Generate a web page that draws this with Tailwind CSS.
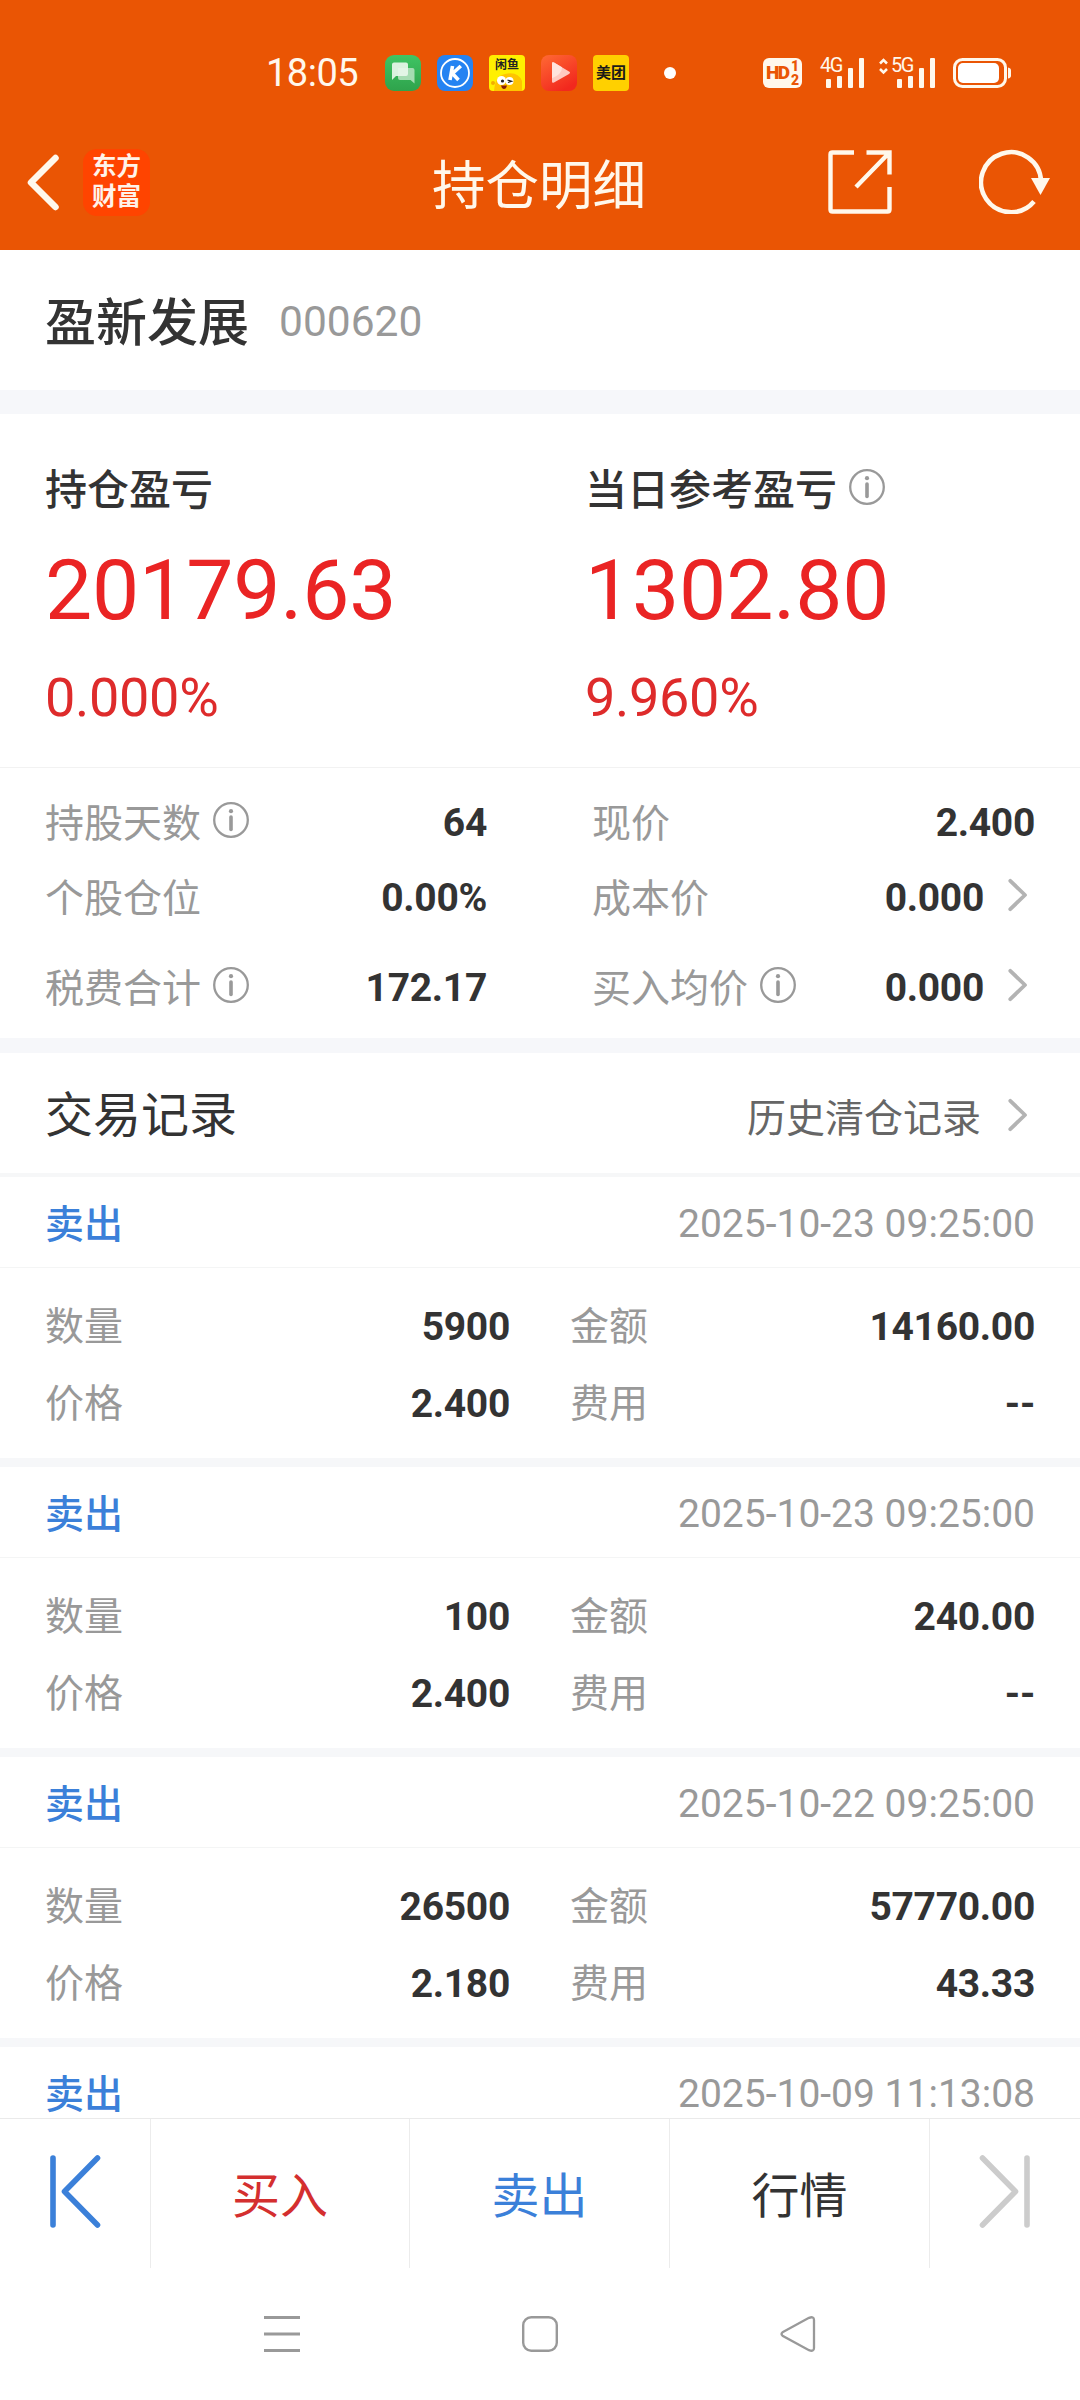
<!DOCTYPE html>
<html lang="zh-CN">
<head>
<meta charset="utf-8">
<title>持仓明细</title>
<script src="https://cdn.jsdelivr.net/npm/@tailwindcss/browser@4"></script>
</head>
<body class="bg-white">
<svg class="hidden">
  <symbol id="info" viewBox="0 0 36 36"><circle cx="18" cy="18" r="16.8" fill="none" stroke="#999" stroke-width="2.3"/><circle cx="18" cy="9.2" r="2.1" fill="#999"/><path d="M18 15v12.5" stroke="#999" stroke-width="3.6" stroke-linecap="round"/></symbol>
  <symbol id="more" viewBox="0 0 20 34"><path d="M2.3 2.8L17 17L2.3 31.2" fill="none" stroke="#b3b3b3" stroke-width="3.8" stroke-linecap="round" stroke-linejoin="round"/></symbol>
</svg>
<div class="flex h-[2400px] w-[1080px] flex-col overflow-hidden bg-white font-['Roboto','Noto_Sans_CJK_SC',sans-serif] text-[39px] leading-[60px] text-[#333]">

  <header class="h-[250px] shrink-0 bg-[#ea5504] text-white">
    <!-- status bar -->
    <div class="flex h-[145px] items-center pl-[266px] text-[#fff8ec]">
      <div class="w-[119px] text-[38px] leading-[40px] tracking-[-0.5px]">18:05</div>
      <div class="flex gap-4">
        <svg class="size-9" viewBox="0 0 36 36"><defs><linearGradient id="g1" x1="0" y1="0" x2="0" y2="1"><stop offset="0" stop-color="#3fc463"/><stop offset="1" stop-color="#2fa34c"/></linearGradient></defs><rect width="36" height="36" rx="9" fill="url(#g1)"/><path d="M13 13h14.500q2 0 2 2v13.500l-4-3.500H15q-2 0-2-2z" fill="#a5dcb2"/><path d="M9 7.500h12q2 0 2 2V19q0 2-2 2H11l-4 4V9.500q0-2 2-2z" fill="#e6f6e9" fill-opacity=".93"/></svg>
        <svg class="size-9" viewBox="0 0 36 36"><rect width="36" height="36" rx="8" fill="#2583f2"/><circle cx="18" cy="18" r="14" fill="none" stroke="#fff" stroke-width="1.800"/><path d="M15.500 11L13 25M23.800 11l-8.300 7.500L21.500 25" fill="none" stroke="#fff" stroke-width="3.600"/></svg>
        <div class="relative size-9 overflow-hidden rounded-[4px] bg-[#fff000] text-center text-[12px] leading-[20px] font-bold text-[#222]">闲鱼
          <svg class="absolute inset-0 size-9" viewBox="0 0 36 36"><path d="M5 36q1-15 11-17 13-3 17 7v10z" fill="#ffc400"/><circle cx="4" cy="28" r="2" fill="#f2ae00"/><circle cx="12.500" cy="25.500" r="4.500" fill="#fff"/><circle cx="20.500" cy="26" r="4" fill="#fff"/><circle cx="13.500" cy="26" r="1.600" fill="#222"/><path d="M18.500 25l4 1.300-3.500 1.200" fill="none" stroke="#222" stroke-width="1.300"/><path d="M12 30.500h6q-1 4-3.500 3.500-2-.5-2.500-3.500z" fill="#8a1c08"/></svg>
        </div>
        <svg class="size-9" viewBox="0 0 36 36"><defs><linearGradient id="g2" x1="0" y1="0" x2=".6" y2="1"><stop offset="0" stop-color="#ff6a34"/><stop offset="1" stop-color="#f2281e"/></linearGradient></defs><rect width="36" height="36" rx="8" fill="url(#g2)"/><path d="M11 8.500q0-2 2-1l15 9q2 1.200 0 2.400l-15 8.500q-2 1-2-1z" fill="#ffc9c1"/><path d="M11 8.500q0-2 2-1l8 4.800q0 7-10 11z" fill="#ffe3dd"/></svg>
        <div class="size-9 rounded-[4px] bg-[#ffd000] text-center text-[15px] leading-[36px] font-bold whitespace-nowrap text-[#1a1a1a]">美团</div>
      </div>
      <div class="ml-[35px] size-3 rounded-full bg-white"></div>
      <div class="ml-[87px] flex h-[30px] w-[39px] items-center rounded-[6px] bg-[#fff8ec] pl-[3px] text-[#ea5504]">
        <span class="w-[25px] text-[19px] leading-[22px] font-black tracking-[-1.500px]">HD</span>
        <span class="flex flex-col text-[14px] leading-[14px] font-black"><span>1</span><span>2</span></span>
      </div>
      <div class="relative ml-[18px] h-[30px] w-[44px]">
        <span class="absolute -top-px left-0 text-[20px] leading-[17px] tracking-[-1.500px]">4G</span>
        <svg class="absolute inset-0 h-[30px] w-[44px]" viewBox="0 0 44 30"><g fill="#fff8ec"><rect x="6" y="21" width="5" height="9" rx="1"/><rect x="17" y="18" width="5" height="12" rx="1"/><rect x="28" y="10" width="5" height="20" rx="1"/><rect x="39" y="0" width="5" height="30" rx="1"/></g></svg>
      </div>
      <div class="relative ml-[15px] h-[30px] w-[56px]">
        <span class="absolute -top-px left-[12px] text-[20px] leading-[17px] tracking-[-1.500px]">5G</span>
        <svg class="absolute inset-0 h-[30px] w-[56px]" viewBox="0 0 56 30"><path d="M1 5.500L4.500 2L8 5.500M1 11l3.500 3.500L8 11" fill="none" stroke="#fff8ec" stroke-width="2.500"/><g fill="#fff8ec"><rect x="18" y="21" width="5" height="9" rx="1"/><rect x="29" y="18" width="5" height="12" rx="1"/><rect x="40" y="10" width="5" height="20" rx="1"/><rect x="51" y="0" width="5" height="30" rx="1"/></g></svg>
      </div>
      <svg class="ml-[18px] h-[30px] w-[58px]" viewBox="0 0 58 30"><rect x="1.500" y="1.500" width="51" height="27" rx="8" fill="none" stroke="#fff8ec" stroke-width="3"/><rect x="5" y="5" width="41" height="20" rx="5" fill="#fff"/><path d="M55 9.500q3 .5 3 3v5q0 2.500-3 3z" fill="#fff8ec"/></svg>
    </div>
    <!-- title bar -->
    <div class="flex h-[75px] items-center">
      <svg class="ml-[27px] h-[57px] w-8" viewBox="0 0 32 57"><path d="M28.500 4L4 28.500L28.500 53" fill="none" stroke="#fff8ec" stroke-width="6.500" stroke-linecap="round" stroke-linejoin="round"/></svg>
      <div class="ml-[24px] h-[67px] w-[67px] rounded-[14px] bg-[#ff4400] pt-[3px] text-center text-[24.500px] leading-[30px] font-bold text-[#fff3ea]">东方<br>财富</div>
      <h1 class="mt-[8px] ml-[282px] w-[216px] text-[53.500px] leading-[75px] font-normal whitespace-nowrap text-[#fff8ec]">持仓明细</h1>
      <svg class="mb-px ml-[180px] size-16" viewBox="0 0 64 64"><path d="M26 2.500H4.500Q2.500 2.500 2.500 4.500V59.500Q2.500 61.500 4.500 61.500H59.500Q61.500 61.500 61.500 59.500V37M38.500 2.500H61.500V24.500M61 3L28 37" fill="none" stroke="#fff8ec" stroke-width="4.400"/></svg>
      <svg class="mb-[3px] ml-[87px] h-[66px] w-[72px]" viewBox="0 0 72 66"><path d="M55 53.500A30 30 0 1 1 62 33" fill="none" stroke="#fff8ec" stroke-width="4.600"/><path d="M52 30H71L61.500 47z" fill="#fff8ec"/></svg>
    </div>
  </header>

  <section class="flex h-[140px] shrink-0 items-start pl-[45px]">
    <h2 class="mt-[39px] w-[234px] text-[51px] leading-[70px] font-medium">盈新发展</h2>
    <span class="mt-[42px] text-[42.500px] text-[#999]">000620</span>
  </section>
  <div class="h-6 shrink-0 bg-[#f6f7fa]"></div>

  <section class="grid h-[354px] shrink-0 grid-cols-2 border-b border-[#f2f2f2] pt-[47px]">
    <div class="pl-[45px]">
      <div class="text-[42px] font-medium">持仓盈亏</div>
      <div class="mt-5 text-[84px] leading-[100px] tracking-[-0.15px] text-[#ea2424]">20179.63</div>
      <div class="mt-[27px] text-[54px] tracking-[-0.3px] text-[#de2b2b]">0.000%</div>
    </div>
    <div class="pl-[45px]">
      <div class="flex items-center text-[42px] font-medium">当日参考盈亏<svg class="mb-2 ml-3 size-9"><use href="#info"/></svg></div>
      <div class="mt-5 text-[84px] leading-[100px] tracking-[-0.15px] text-[#ea2424]">1302.80</div>
      <div class="mt-[27px] text-[54px] tracking-[-0.3px] text-[#de2b2b]">9.960%</div>
    </div>
  </section>

  <section class="grid h-[270px] shrink-0 grid-cols-[442px_443px] grid-rows-[75px_75px_90px] content-start gap-x-[105px] pt-[17px] pl-[45px] text-[#999]">
    <div class="flex items-center"><span class="mt-[2px]">持股天数</span><svg class="mb-[5px] ml-3 size-9"><use href="#info"/></svg><b class="ml-auto tracking-[-0.3px] text-[#333]">64</b></div>
    <div class="flex items-center"><span class="mt-[2px]">现价</span><b class="ml-auto tracking-[-0.3px] text-[#333]">2.400</b></div>
    <div class="flex items-center"><span class="mt-[2px]">个股仓位</span><b class="ml-auto tracking-[-0.3px] text-[#333]">0.00%</b></div>
    <div class="flex items-center"><span class="mt-[2px]">成本价</span><b class="ml-auto tracking-[-0.3px] text-[#333]">0.000</b><svg class="mr-[7px] mb-[5px] ml-6 h-[34px] w-5"><use href="#more"/></svg></div>
    <div class="flex items-center pt-[15px]"><span class="mt-[2px]">税费合计</span><svg class="mb-[5px] ml-3 size-9"><use href="#info"/></svg><b class="ml-auto tracking-[-0.3px] text-[#333]">172.17</b></div>
    <div class="flex items-center pt-[15px]"><span class="mt-[2px]">买入均价</span><svg class="mb-[5px] ml-3 size-9"><use href="#info"/></svg><b class="ml-auto tracking-[-0.3px] text-[#333]">0.000</b><svg class="mr-[7px] mb-[5px] ml-6 h-[34px] w-5"><use href="#more"/></svg></div>
  </section>
  <div class="h-[15px] shrink-0 bg-[#f6f7fa]"></div>

  <section class="flex h-[124px] shrink-0 items-center border-b-4 border-[#f6f7f8] pt-1 pr-[52px] pl-[45px]">
    <h3 class="mt-[2px] text-[48px]">交易记录</h3>
    <span class="mt-[7px] ml-auto text-[#666]">历史清仓记录</span>
    <svg class="ml-[27px] h-[34px] w-5"><use href="#more"/></svg>
  </section>

  <main class="h-[941px] shrink-0 overflow-hidden">
    <article class="h-[290px] border-b-[9px] border-[#f6f7f9]">
      <div class="flex h-[91px] items-center justify-between border-b border-[#f4f5f5] pt-[3px] pr-[45px] pl-[45px]"><span class="mt-[2px] font-medium text-[#3b80d9]">卖出</span><time class="text-[#999]">2025-10-23 09:25:00</time></div>
      <div class="grid grid-cols-[465px_465px] gap-x-[60px] pt-[21px] pl-[45px] leading-[77px] text-[#999]">
        <div class="flex justify-between">数量<b class="tracking-[-0.3px] text-[#333]">5900</b></div><div class="flex justify-between">金额<b class="tracking-[-0.3px] text-[#333]">14160.00</b></div>
        <div class="flex justify-between">价格<b class="tracking-[-0.3px] text-[#333]">2.400</b></div><div class="flex justify-between">费用<b class="tracking-[-0.3px] text-[#333]">--</b></div>
      </div>
    </article>
    <article class="h-[290px] border-b-[9px] border-[#f6f7f9]">
      <div class="flex h-[91px] items-center justify-between border-b border-[#f4f5f5] pt-[3px] pr-[45px] pl-[45px]"><span class="mt-[2px] font-medium text-[#3b80d9]">卖出</span><time class="text-[#999]">2025-10-23 09:25:00</time></div>
      <div class="grid grid-cols-[465px_465px] gap-x-[60px] pt-[21px] pl-[45px] leading-[77px] text-[#999]">
        <div class="flex justify-between">数量<b class="tracking-[-0.3px] text-[#333]">100</b></div><div class="flex justify-between">金额<b class="tracking-[-0.3px] text-[#333]">240.00</b></div>
        <div class="flex justify-between">价格<b class="tracking-[-0.3px] text-[#333]">2.400</b></div><div class="flex justify-between">费用<b class="tracking-[-0.3px] text-[#333]">--</b></div>
      </div>
    </article>
    <article class="h-[290px] border-b-[9px] border-[#f6f7f9]">
      <div class="flex h-[91px] items-center justify-between border-b border-[#f4f5f5] pt-[3px] pr-[45px] pl-[45px]"><span class="mt-[2px] font-medium text-[#3b80d9]">卖出</span><time class="text-[#999]">2025-10-22 09:25:00</time></div>
      <div class="grid grid-cols-[465px_465px] gap-x-[60px] pt-[21px] pl-[45px] leading-[77px] text-[#999]">
        <div class="flex justify-between">数量<b class="tracking-[-0.3px] text-[#333]">26500</b></div><div class="flex justify-between">金额<b class="tracking-[-0.3px] text-[#333]">57770.00</b></div>
        <div class="flex justify-between">价格<b class="tracking-[-0.3px] text-[#333]">2.180</b></div><div class="flex justify-between">费用<b class="tracking-[-0.3px] text-[#333]">43.33</b></div>
      </div>
    </article>
    <article>
      <div class="flex h-[91px] items-center justify-between pt-[3px] pr-[45px] pl-[45px]"><span class="mt-[2px] font-medium text-[#3b80d9]">卖出</span><time class="text-[#999]">2025-10-09 11:13:08</time></div>
    </article>
  </main>

  <nav class="grid h-[150px] shrink-0 grid-cols-[151px_259px_260px_260px_150px] grid-rows-[149px] border-t border-[#eaeaea] text-center text-[48px] leading-[156px]">
    <div class="flex items-center border-r border-[#ececec] pb-1 pl-[50px]"><svg class="h-[73px] w-[51px]" viewBox="0 0 51 73"><path d="M3 3V70M47.500 3L14.500 36.500L47.500 70" fill="none" stroke="#3b80d9" stroke-width="5.600" stroke-linecap="round" stroke-linejoin="round"/></svg></div>
    <div class="border-r border-[#ececec] text-[#d42f2f]">买入</div>
    <div class="border-r border-[#ececec] text-[#3b80d9]">卖出</div>
    <div class="border-r border-[#ececec]">行情</div>
    <div class="flex items-center justify-end pr-[50px] pb-1"><svg class="h-[73px] w-[51px]" viewBox="0 0 51 73"><path d="M48 3V70M3.500 3L36.500 36.500L3.500 70" fill="none" stroke="#ccc" stroke-width="5.600" stroke-linecap="round" stroke-linejoin="round"/></svg></div>
  </nav>

  <!-- system navigation keys -->
  <footer class="flex h-[132px] shrink-0 items-center gap-[222px] pl-[264px]">
    <svg class="size-9" viewBox="0 0 36 36"><path d="M0 1.500H36M0 18H36M0 34.500H36" stroke="#999" stroke-width="2.800"/></svg>
    <svg class="size-9" viewBox="0 0 36 36"><rect x="1.200" y="1.200" width="33.600" height="33.600" rx="8" fill="none" stroke="#999" stroke-width="2.400"/></svg>
    <svg class="size-9" viewBox="0 0 36 36"><path d="M2.500 16.300L29 1.800Q34 0 34 4V32Q34 36 29 34.200L2.500 19.700Q.5 18 2.500 16.300z" fill="none" stroke="#999" stroke-width="2.300"/></svg>
  </footer>
</div>
</body>
</html>
